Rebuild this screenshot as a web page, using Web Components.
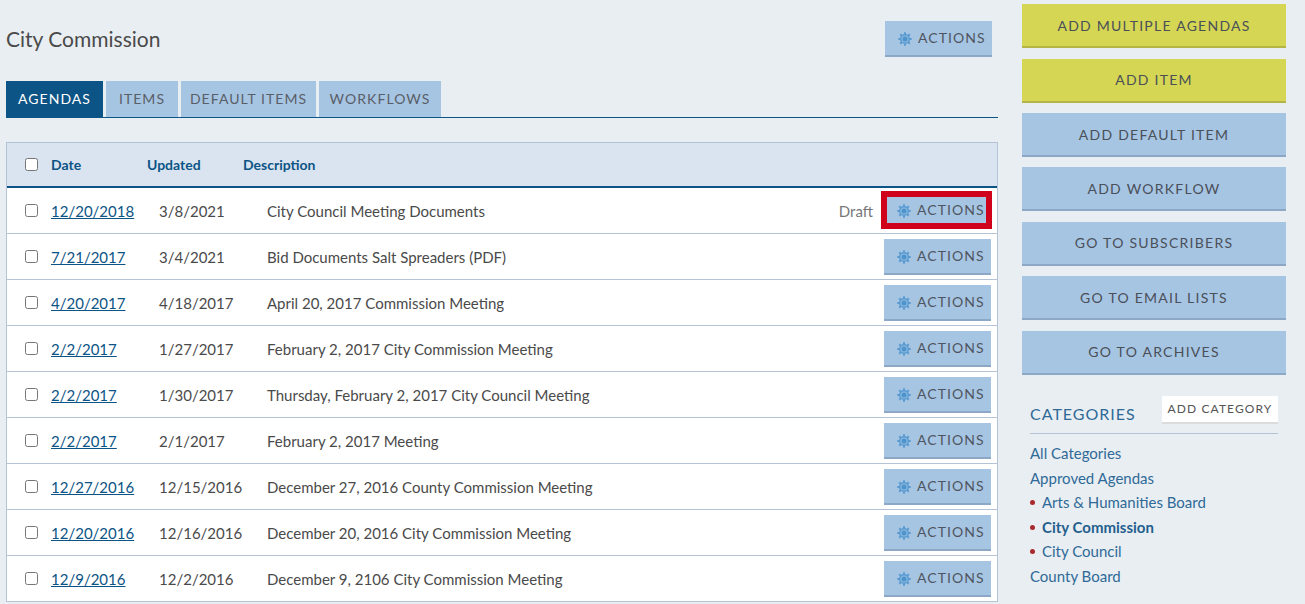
<!DOCTYPE html>
<html><head><meta charset="utf-8">
<style>
html,body{margin:0;padding:0;height:604px;overflow:hidden;background:#e9eef3;font-family:Lato,"Liberation Sans",sans-serif;color:#4a4a4a}
</style></head><body>
<app-page></app-page>
<template id="rows-src"></template>
<script>
const FONT='Lato,"Liberation Sans",sans-serif';
const gear=`<svg width="14" height="14" viewBox="0 0 14 14" aria-hidden="true"><g fill="#5a9ad0"><circle cx="7" cy="7" r="5.1"/><g id="t"><rect x="6" y="0.3" width="2" height="2"/><rect x="6" y="11.7" width="2" height="2"/><rect x="0.3" y="6" width="2" height="2"/><rect x="11.7" y="6" width="2" height="2"/><rect x="6" y="0.3" width="2" height="2" transform="rotate(45 7 7)"/><rect x="6" y="11.7" width="2" height="2" transform="rotate(45 7 7)"/><rect x="0.3" y="6" width="2" height="2" transform="rotate(45 7 7)"/><rect x="11.7" y="6" width="2" height="2" transform="rotate(45 7 7)"/></g></g><circle cx="7" cy="7" r="3.6" fill="#8dbbe0"/><circle cx="7" cy="7" r="2.5" fill="#4f93cd"/></svg>`;

class ActionsButton extends HTMLElement{
  constructor(){super();const s=this.attachShadow({mode:'open'});
  s.innerHTML=`<style>
  :host{display:block;box-sizing:border-box;width:107px;height:36px;background:#a6c5e3;border-bottom:2px solid #8ca8c6;font:14px ${FONT};letter-spacing:1.05px;color:#4f5560}
  :host([focused]){width:111px;height:38px;border:6px solid #d0021b;background:#a6c5e3}
  .i{display:flex;align-items:center;height:34px;padding-left:13px;gap:6px}
  :host([focused]) .i{height:26px;padding-left:10px}
  svg{flex:none;margin-top:2px}
  </style><div class="i">${gear}<span>ACTIONS</span></div>`;}
}
customElements.define('actions-button',ActionsButton);

class TabBar extends HTMLElement{
  constructor(){super();const s=this.attachShadow({mode:'open'});
  s.innerHTML=`<style>
  :host{display:flex;gap:3px;height:37px;box-sizing:border-box;border-bottom:1px solid #0c5485;font:14px ${FONT};letter-spacing:1.05px}
  </style><slot></slot>`;}
}
customElements.define('tab-bar',TabBar);
class TabItem extends HTMLElement{
  constructor(){super();const s=this.attachShadow({mode:'open'});
  s.innerHTML=`<style>
  :host{display:flex;align-items:center;justify-content:center;height:36px;box-sizing:border-box;background:#a6c5e3;color:#5a5e66;padding-bottom:1px}
  :host([active]){background:#0c5485;color:#fff;height:37px;padding-bottom:2px}
  </style><slot></slot>`;}
}
customElements.define('tab-item',TabItem);

class RowCheck extends HTMLElement{
  constructor(){super();const s=this.attachShadow({mode:'open'});
  s.innerHTML=`<style>
  :host{display:block;box-sizing:border-box;width:13px;height:13px;background:#fff;border:1px solid #767676;border-radius:2.5px;flex:none}
  </style>`;}
}
customElements.define('row-check',RowCheck);

class AgendaRow extends HTMLElement{
  constructor(){super();const s=this.attachShadow({mode:'open'});
  const a=n=>this.getAttribute(n)||'';
  s.innerHTML=`<style>
  :host{display:flex;align-items:center;box-sizing:border-box;height:46px;background:#fff;border-top:1px solid #b5c3d6;padding-left:18px;padding-right:6px;font:15px ${FONT};color:#4a4a4a}
  :host([first]){border-top:0;height:45px}
  row-check{margin-right:13px;margin-top:-1px}
  a{width:108px;color:#0c5485;text-decoration:underline;flex:none}
  .u{width:108px;flex:none}
  .d{flex:1;white-space:nowrap}
  .s{color:#777;margin-right:8px}
  :host([first]) actions-button{margin-right:-1px;margin-top:-2px}
  </style><row-check></row-check><a href="#">${a('date')}</a><span class="u">${a('updated')}</span><span class="d">${a('desc')}</span>${a('status')?`<span class="s">${a('status')}</span>`:''}<actions-button ${this.hasAttribute('first')?'focused':''}></actions-button>`;}
}
customElements.define('agenda-row',AgendaRow);

class AgendaTable extends HTMLElement{
  constructor(){super();const s=this.attachShadow({mode:'open'});
  s.innerHTML=`<style>
  :host{display:block;box-sizing:border-box;width:992px;border:1px solid #b5c3d6;border-bottom:1px solid #b5c3d6}
  .h{display:flex;align-items:center;box-sizing:border-box;height:45px;background:#dae4f0;border-bottom:2px solid #0c5485;padding-left:18px;font:bold 14px ${FONT};color:#0c5485}
  row-check{margin-right:13px}
  .c{width:96px}
  </style><div class="h"><row-check></row-check><span class="c">Date</span><span class="c">Updated</span><span>Description</span></div><slot></slot>`;}
}
customElements.define('agenda-table',AgendaTable);

class SideButton extends HTMLElement{
  constructor(){super();const s=this.attachShadow({mode:'open'});
  s.innerHTML=`<style>
  :host{display:flex;align-items:center;justify-content:center;box-sizing:border-box;height:44px;background:#a6c5e3;border-bottom:2px solid #8ca8c6;font:14px ${FONT};letter-spacing:1.25px;color:#4a4f58}
  :host([yellow]){background:#d4d654;border-bottom-color:#b3b545}
  </style><slot></slot>`;}
}
customElements.define('side-button',SideButton);

class CategoryList extends HTMLElement{
  constructor(){super();const s=this.attachShadow({mode:'open'});
  s.innerHTML=`<style>
  :host{display:block;margin:21px 8px 0;font:15px ${FONT};color:#2f6a97}
  .t{display:flex;justify-content:space-between;align-items:center;height:37px;border-bottom:1px solid #b5c3d6;padding-bottom:0}
  .n{font-size:16px;letter-spacing:1px;color:#2f6a97;margin-top:-2px}
  .b{box-sizing:border-box;width:116px;height:28px;background:#fff;border-bottom:2px solid #dcdcdc;display:flex;align-items:center;justify-content:center;font-size:12px;letter-spacing:1.1px;color:#555;margin-top:-9px}
  ul{list-style:none;margin:7px 0 0;padding:0}
  </style><div class="t"><span class="n">CATEGORIES</span><span class="b">ADD CATEGORY</span></div><ul><slot></slot></ul>`;}
}
customElements.define('category-list',CategoryList);
class CategoryItem extends HTMLElement{
  constructor(){super();const s=this.attachShadow({mode:'open'});
  s.innerHTML=`<style>
  :host{display:flex;align-items:center;height:24.6px;white-space:nowrap}
  :host([current]){font-weight:bold;color:#245f8d}
  i{display:none;width:5px;height:5px;border-radius:50%;background:#a92a2e;margin-right:7px;margin-top:1px}
  :host([dot]) i{display:block}
  </style><i></i><slot></slot>`;}
}
customElements.define('category-item',CategoryItem);

class AppPage extends HTMLElement{
  constructor(){super();const s=this.attachShadow({mode:'open'});
  const rows=[['12/20/2018','3/8/2021','City Council Meeting Documents','Draft'],['7/21/2017','3/4/2021','Bid Documents Salt Spreaders (PDF)'],['4/20/2017','4/18/2017','April 20, 2017 Commission Meeting'],['2/2/2017','1/27/2017','February 2, 2017 City Commission Meeting'],['2/2/2017','1/30/2017','Thursday, February 2, 2017 City Council Meeting'],['2/2/2017','2/1/2017','February 2, 2017 Meeting'],['12/27/2016','12/15/2016','December 27, 2016 County Commission Meeting'],['12/20/2016','12/16/2016','December 20, 2016 City Commission Meeting'],['12/9/2016','12/2/2016','December 9, 2106 City Commission Meeting']];
  const esc=t=>t.replace(/&/g,'&amp;');
  s.innerHTML=`<style>
  :host{display:flex;align-items:flex-start;width:1305px;height:604px;overflow:hidden}
  .l{width:992px;margin-left:6px;flex:none}
  .head{display:flex;align-items:center;justify-content:space-between;height:81px;padding-right:6px;padding-top:0;box-sizing:border-box}
  h1{margin:-4px 0 0;font:normal 21px ${FONT};color:#4a4a4a}
  .head actions-button{margin-top:-4px}
  agenda-table{margin-top:24px}
  .r{width:264px;margin-left:24px;flex:none;padding-top:4.3px;box-sizing:border-box}
  .bs{display:flex;flex-direction:column;gap:10.4px}
  </style>
  <div class="l"><div class="head"><h1>City Commission</h1><actions-button></actions-button></div>
  <tab-bar><tab-item active style="width:97px">AGENDAS</tab-item><tab-item style="width:72px">ITEMS</tab-item><tab-item style="width:135px">DEFAULT ITEMS</tab-item><tab-item style="width:122px">WORKFLOWS</tab-item></tab-bar>
  <agenda-table>${rows.map((r,i)=>`<agenda-row ${i==0?'first':''} date="${r[0]}" updated="${r[1]}" desc="${r[2]}" status="${r[3]||''}"></agenda-row>`).join('')}</agenda-table></div>
  <div class="r"><div class="bs"><side-button yellow>ADD MULTIPLE AGENDAS</side-button><side-button yellow>ADD ITEM</side-button><side-button>ADD DEFAULT ITEM</side-button><side-button>ADD WORKFLOW</side-button><side-button>GO TO SUBSCRIBERS</side-button><side-button>GO TO EMAIL LISTS</side-button><side-button>GO TO ARCHIVES</side-button></div>
  <category-list><category-item>All Categories</category-item><category-item>Approved Agendas</category-item><category-item dot>Arts &amp; Humanities Board</category-item><category-item dot current>City Commission</category-item><category-item dot>City Council</category-item><category-item>County Board</category-item></category-list></div>`;}
}
customElements.define('app-page',AppPage);
</script>
</body></html>
